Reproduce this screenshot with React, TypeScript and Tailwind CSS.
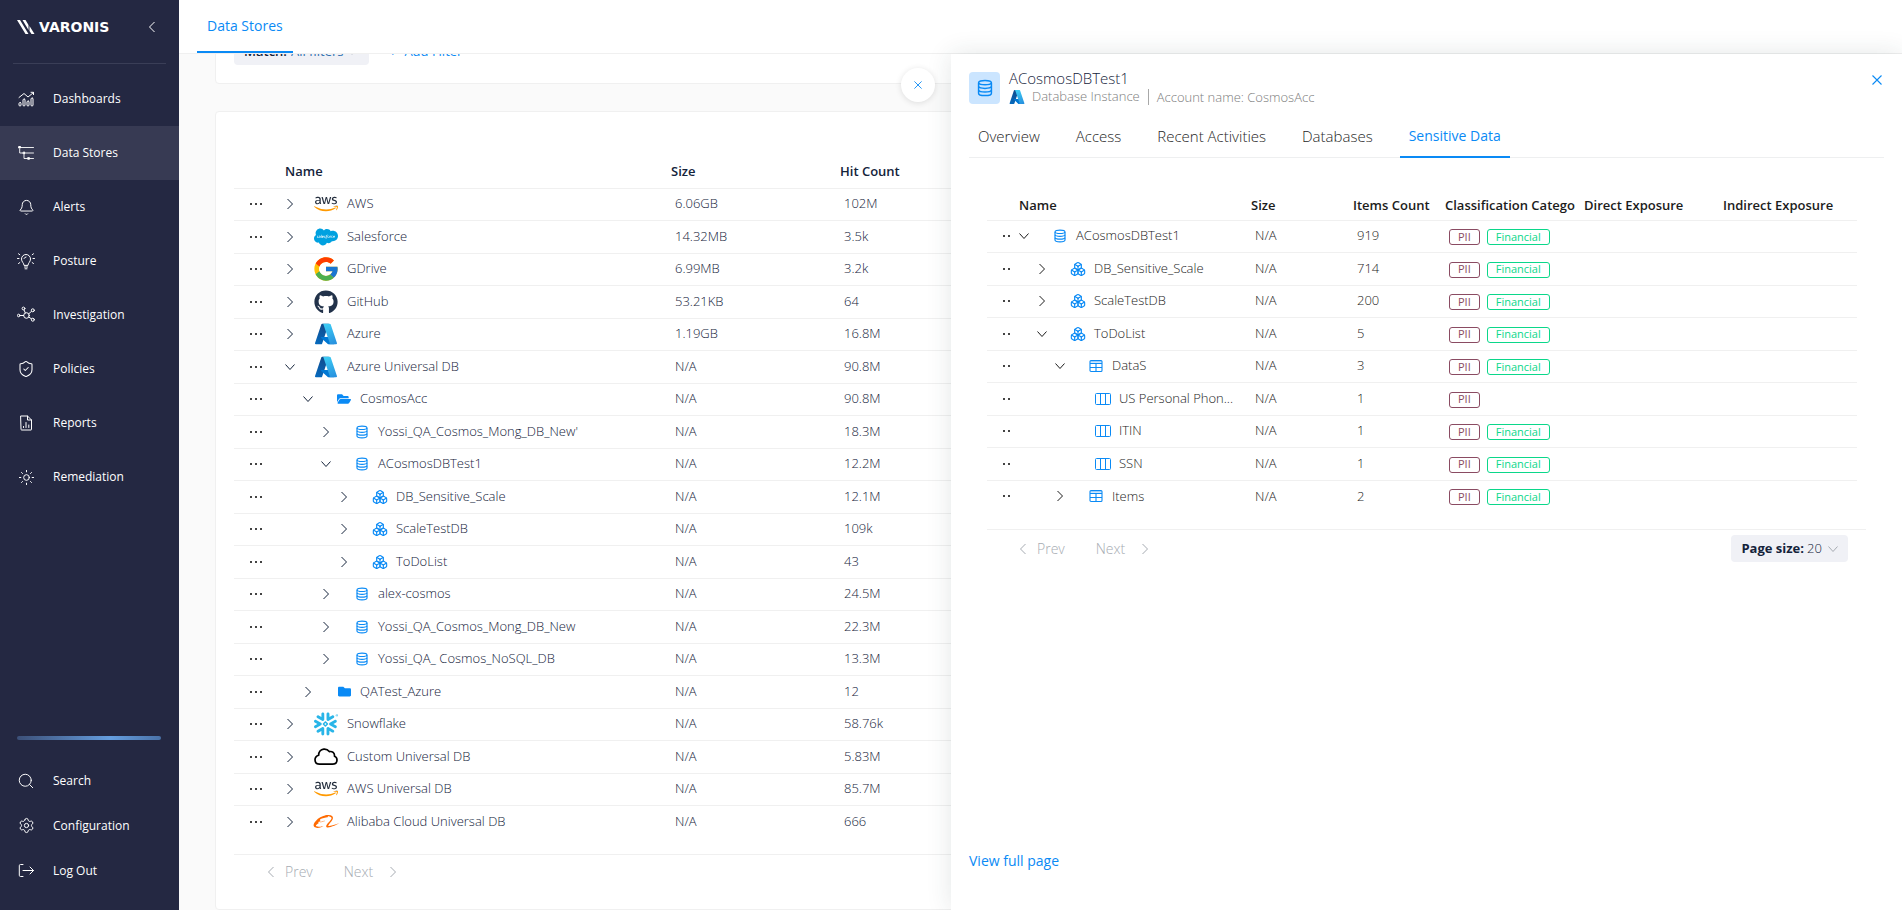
import type { ReactNode } from "react";
import { Bell, Boxes, Search, Settings, ShieldCheck, Sun } from "lucide-react";
import { FaAws, FaFolder, FaFolderOpen, FaGithub, FaSalesforce } from "react-icons/fa";
import { FcGoogle } from "react-icons/fc";
import { SiSnowflake } from "react-icons/si";
import { AiOutlineAlibaba } from "react-icons/ai";

/* ---------- icons ---------- */

type Dir = "left" | "right" | "down";

const CHEVRONS: Record<Dir, string> = {
  left: "M7.5 1 2.5 6l5 5",
  right: "M2.5 1l5 5-5 5",
  down: "M0.5 3.5 5 8.5l4.500-5",
};

function Chevron({ dir, className = "" }: { dir: Dir; className?: string }) {
  return (
    <svg viewBox="0 0 10 12" aria-hidden="true" className={`h-3 w-[10px] shrink-0 ${className}`} fill="none" stroke="currentColor" strokeWidth="1">
      <path d={CHEVRONS[dir]} />
    </svg>
  );
}

function Cross({ className }: { className: string }) {
  return (
    <svg viewBox="0 0 10 10" aria-hidden="true" className={className} fill="none" stroke="currentColor" strokeWidth="1.1">
      <path d="M.5.5l9 9M9.500.5l-9 9" />
    </svg>
  );
}

function AzureLogo({ className }: { className: string }) {
  return (
    <svg viewBox="0 0 96 96" aria-hidden="true" className={className}>
      <defs>
        <linearGradient id="az1" x1="0.6" y1="0" x2="0.3" y2="1">
          <stop offset="0" stopColor="#114a8b" />
          <stop offset="1" stopColor="#0669bc" />
        </linearGradient>
        <linearGradient id="az2" x1="0.4" y1="0" x2="0.7" y2="1">
          <stop offset="0" stopColor="#3ccbf4" />
          <stop offset="1" stopColor="#2892df" />
        </linearGradient>
      </defs>
      <path fill="url(#az1)" d="M33.338 6.544h26.038l-27.030 80.087a4.152 4.152 0 0 1-3.933 2.824H8.149a4.145 4.145 0 0 1-3.928-5.470L29.404 9.368a4.152 4.152 0 0 1 3.934-2.825z" />
      <path fill="#0078d4" d="M71.175 60.261h-41.290a1.911 1.911 0 0 0-1.305 3.309l26.532 24.764a4.171 4.171 0 0 0 2.846 1.121h23.380z" />
      <path fill="url(#az2)" d="M66.595 9.364a4.145 4.145 0 0 0-3.928-2.820H33.648a4.146 4.146 0 0 1 3.928 2.820l25.184 74.620a4.146 4.146 0 0 1-3.928 5.472h29.020a4.146 4.146 0 0 0 3.927-5.472z" />
    </svg>
  );
}

function AwsLogo() {
  return (
    <>
      <svg className="absolute size-0" aria-hidden="true">
        <defs>
          <linearGradient id="aws" x1="0" y1="0" x2="0" y2="1">
            <stop offset="0.62" stopColor="#252f3e" />
            <stop offset="0.62" stopColor="#ff9900" />
          </linearGradient>
        </defs>
      </svg>
      <FaAws className="h-5 w-6" fill="url(#aws)" />
    </>
  );
}

function CloudOutline() {
  return (
    <svg viewBox="0 0 24 18" aria-hidden="true" className="h-[18px] w-6" fill="none" stroke="#000" strokeWidth="1.7" strokeLinejoin="round">
      <path d="M5.500 16.200h13c2.600 0 4.500-1.700 4.500-4.100 0-2-1.100-3.400-2.500-3.900.3-3.300-2.200-5.200-5.200-4.600C14 1.800 12 .9 9.800 1.100 6.600 1.400 4.600 4 4.700 7.200 2.200 8 1 9.700 1 11.800c0 2.600 1.900 4.400 4.500 4.400z" />
    </svg>
  );
}

function DatabaseIcon({ className = "size-[14px]" }: { className?: string }) {
  return (
    <svg viewBox="0 0 14 14" aria-hidden="true" className={className} fill="none" stroke="#0a8af5" strokeWidth="1.150">
      <path d="M2 3c0-1.300 2.200-1.900 5-1.900S12 1.700 12 3v8c0 1.300-2.200 1.900-5 1.900S2 12.300 2 11z" />
      <path d="M2 3.100c.4 1 2.200 1.400 5 1.400s4.600-.4 5-1.400M2 5.900c.4 1 2.200 1.400 5 1.400s4.600-.4 5-1.400M2 8.700c.4 1 2.200 1.400 5 1.400s4.600-.4 5-1.400" />
    </svg>
  );
}

function TableIcon() {
  return (
    <svg viewBox="0 0 14 14" aria-hidden="true" className="size-[14px]" fill="none" stroke="#0a8af5" strokeWidth="1.100">
      <rect x="1" y="1.500" width="12" height="11" rx="1" />
      <path d="M1 4.500h12M1 8.500h12M7 4.500v8" />
      <path d="M1.500 2.500h11" strokeOpacity="0.4" strokeWidth="2" />
    </svg>
  );
}

function ColumnsIcon() {
  return (
    <svg viewBox="0 0 16 14" aria-hidden="true" className="h-[14px] w-4" fill="none" stroke="#0a8af5" strokeWidth="1">
      <rect x=".5" y="1.500" width="15" height="11" rx="1" />
      <path d="M5.500 1.500v11M10.500 1.500v11" />
    </svg>
  );
}

function NavSvg({ children }: { children: ReactNode }) {
  return (
    <svg viewBox="0 0 18 18" aria-hidden="true" className="size-[18px]" fill="none" stroke="currentColor" strokeWidth="1" strokeLinecap="round" strokeLinejoin="round">
      {children}
    </svg>
  );
}

const DashboardsIcon = () => (
  <NavSvg>
    <path d="M2 7.500 7 3.500l4 3.500 5.500-4.500M14 2.300h2.500v2.300" />
    <rect x="2" y="12.500" width="2" height="3.500" rx="1" />
    <rect x="6" y="9" width="2" height="7" rx="1" />
    <rect x="10" y="11" width="2" height="5" rx="1" />
    <rect x="14" y="8" width="2" height="8" rx="1" />
  </NavSvg>
);

const DataStoresIcon = () => (
  <NavSvg>
    <path d="M4 3.500h12.500M2.700 5v4h3.300M9 9h7.500M7 10.500v4h3M13 14.500h3.500" strokeWidth="0.9" />
    <rect x="2" y="2.500" width="1.500" height="1.500" fill="currentColor" />
    <rect x="6.500" y="8.200" width="1.500" height="1.500" fill="currentColor" />
    <rect x="11" y="13.700" width="1.500" height="1.500" fill="currentColor" />
  </NavSvg>
);

const PostureIcon = () => (
  <NavSvg>
    <path d="M7 13c0-2-2.500-3-2.500-6a4.500 4.500 0 0 1 9 0c0 3-2.500 4-2.500 6zM7.500 15h3M8 16.800h2M7 6.500A2.300 2.300 0 0 1 9 5" />
    <path d="M.5 6.500h1.500M16 6.500h1.500M1.500 1.800l1.300.9M16.500 1.800l-1.300.9M1.500 11.500l1.300-.9M16.500 11.500l-1.300-.9" />
  </NavSvg>
);

const InvestigationIcon = () => (
  <NavSvg>
    <circle cx="9.500" cy="9.500" r="2.800" />
    <circle cx="1.700" cy="9.500" r="1.300" />
    <circle cx="6.500" cy="2.500" r="1.400" />
    <circle cx="15.800" cy="4.300" r="1.500" />
    <circle cx="15.800" cy="13.700" r="1.500" />
    <path d="M3 9.500h3.700M7 3.900l1.300 3M11.800 7.800l2.700-2.500M11.800 11l2.700 1.900" />
  </NavSvg>
);

const ReportsIcon = () => (
  <NavSvg>
    <path d="M4 2h6.500L14.500 6v9.500a.5.5 0 0 1-.5.5H4.500a.5.5 0 0 1-.5-.5zM10.500 2v4h4M6.500 13.500v-1M9 13.500v-5M11.800 13.500V11" />
  </NavSvg>
);

const LogOutIcon = () => (
  <NavSvg>
    <path d="M6 2.500H3.500a1.200 1.200 0 0 0-1.200 1.200v9.600a1.200 1.200 0 0 0 1.200 1.200H6M6 8.500h10.500M13 5l3.500 3.500L13 12" />
  </NavSvg>
);

/* ---------- sidebar ---------- */

const NAV: { label: string; icon: ReactNode; active?: boolean }[] = [
  { label: "Dashboards", icon: <DashboardsIcon /> },
  { label: "Data Stores", icon: <DataStoresIcon />, active: true },
  { label: "Alerts", icon: <Bell className="size-[17px]" strokeWidth={1.4} /> },
  { label: "Posture", icon: <PostureIcon /> },
  { label: "Investigation", icon: <InvestigationIcon /> },
  { label: "Policies", icon: <ShieldCheck className="size-[18px]" strokeWidth={1.4} /> },
  { label: "Reports", icon: <ReportsIcon /> },
  { label: "Remediation", icon: <Sun className="size-[17px]" strokeWidth={1.4} /> },
];

const TOOLS: { label: string; icon: ReactNode }[] = [
  { label: "Search", icon: <Search className="size-[18px]" strokeWidth={1.3} /> },
  { label: "Configuration", icon: <Settings className="size-[17px]" strokeWidth={1.4} /> },
  { label: "Log Out", icon: <LogOutIcon /> },
];

function Sidebar() {
  return (
    <aside className="flex w-[179px] shrink-0 flex-col bg-[#242842] text-xs text-white">
      <div className="flex h-[54px] items-center pr-[22px] pl-[17px]">
        <svg viewBox="0 0 18 14" aria-hidden="true" className="h-[14px] w-[18px]" fill="#fff">
          <path d="M0 0h3l8.500 14h-3zM5.500 0h3l3 5v5zM12.500 6l5 8h-3l-2-3z" />
        </svg>
        <span className="ml-1 font-['DejaVu_Sans'] text-sm leading-5 font-bold">VARONIS</span>
        <button type="button" aria-label="Collapse menu" className="ml-auto">
          <Chevron dir="left" />
        </button>
      </div>
      <hr className="mx-[13px] mt-[9px] mb-2 border-[#3a3e57]" />
      <nav>
        {NAV.map((n) => (
          <a key={n.label} href="#" className={`flex h-[54px] items-center ${n.active ? "bg-[#373a53]" : ""}`}>
            <span className="flex w-[53px] justify-center pr-px">{n.icon}</span>
            {n.label}
          </a>
        ))}
      </nav>
      <div className="mt-auto mr-[18px] ml-[17px] h-1 rounded-sm bg-linear-to-r from-[#3c5078] via-[#659edf] via-65% to-[#4a72a8]" />
      <nav className="mt-[18px] mb-[17px]">
        {TOOLS.map((n) => (
          <a key={n.label} href="#" className="flex h-[45px] items-center">
            <span className="flex w-[53px] justify-center pr-px">{n.icon}</span>
            {n.label}
          </a>
        ))}
      </nav>
    </aside>
  );
}

/* ---------- tree cells ---------- */

type Kind = "aws" | "salesforce" | "google" | "github" | "azure" | "snowflake" | "cloud" | "alibaba" | "open" | "folder" | "db" | "cubes" | "table" | "column";

const ICONS: Record<Kind, ReactNode> = {
  aws: <AwsLogo />,
  salesforce: <FaSalesforce className="h-5 w-6 text-[#00a1e0]" />,
  google: <FcGoogle className="size-7 shrink-0" />,
  github: <FaGithub className="size-6 text-[#22324a]" />,
  azure: <AzureLogo className="size-6" />,
  snowflake: <SiSnowflake className="size-6 text-[#29b5e8]" />,
  cloud: <CloudOutline />,
  alibaba: <AiOutlineAlibaba className="size-[29px] shrink-0 text-[#ff6a00]" />,
  open: <FaFolderOpen className="size-[14px] text-[#0a8af5]" />,
  folder: <FaFolder className="size-[13px] text-[#0a8af5]" />,
  db: <DatabaseIcon />,
  cubes: <Boxes className="size-4 shrink-0 text-[#0a8af5]" strokeWidth={1.7} />,
  table: <TableIcon />,
  column: <ColumnsIcon />,
};

const INDENT = ["pl-0", "pl-[18px]", "pl-[36px]", "pl-[54px]"];

function TreeLabel({ name, kind, depth, state }: { name: string; kind: Kind; depth: number; state?: Dir }) {
  const logo = !["open", "folder", "db", "cubes", "table", "column"].includes(kind);
  const leaf = !state;
  return (
    <div className={`flex items-center ${INDENT[depth]}`}>
      {state ? (
        <button type="button" aria-label={state === "down" ? "Collapse" : "Expand"}>
          <Chevron dir={state} />
        </button>
      ) : null}
      <span className={`flex shrink-0 items-center justify-center ${logo ? "ml-[19px] w-6" : leaf ? "ml-[22px] w-4" : "ml-6 w-[14px]"}`}>{ICONS[kind]}</span>
      <span className={`whitespace-nowrap ${leaf ? "ml-2" : "ml-[9px]"}`}>{name}</span>
    </div>
  );
}

function Dots({ count }: { count: number }) {
  return (
    <button type="button" aria-label="More actions" className="flex h-4 items-center gap-[3px] align-middle">
      {Array.from({ length: count }, (_, i) => (
        <span key={i} className="size-[2px] bg-[#444]" />
      ))}
    </button>
  );
}

function Pager() {
  return (
    <div className="flex items-center text-sm font-light text-[#a6abb2]">
      <button type="button" disabled className="flex items-center gap-[9px]">
        <Chevron dir="left" />
        Prev
      </button>
      <button type="button" disabled className="ml-[31px] flex items-center gap-[15px]">
        Next
        <Chevron dir="right" />
      </button>
    </div>
  );
}

/* ---------- main list ---------- */

type Row = [string, Kind, number, Dir, string, string];

const STORES: Row[] = [
  ["AWS", "aws", 0, "right", "6.06GB", "102M"],
  ["Salesforce", "salesforce", 0, "right", "14.32MB", "3.5k"],
  ["GDrive", "google", 0, "right", "6.99MB", "3.2k"],
  ["GitHub", "github", 0, "right", "53.21KB", "64"],
  ["Azure", "azure", 0, "right", "1.19GB", "16.8M"],
  ["Azure Universal DB", "azure", 0, "down", "N/A", "90.8M"],
  ["CosmosAcc", "open", 1, "down", "N/A", "90.8M"],
  ["Yossi_QA_Cosmos_Mong_DB_New'", "db", 2, "right", "N/A", "18.3M"],
  ["ACosmosDBTest1", "db", 2, "down", "N/A", "12.2M"],
  ["DB_Sensitive_Scale", "cubes", 3, "right", "N/A", "12.1M"],
  ["ScaleTestDB", "cubes", 3, "right", "N/A", "109k"],
  ["ToDoList", "cubes", 3, "right", "N/A", "43"],
  ["alex-cosmos", "db", 2, "right", "N/A", "24.5M"],
  ["Yossi_QA_Cosmos_Mong_DB_New", "db", 2, "right", "N/A", "22.3M"],
  ["Yossi_QA_ Cosmos_NoSQL_DB", "db", 2, "right", "N/A", "13.3M"],
  ["QATest_Azure", "folder", 1, "right", "N/A", "12"],
  ["Snowflake", "snowflake", 0, "right", "N/A", "58.76k"],
  ["Custom Universal DB", "cloud", 0, "right", "N/A", "5.83M"],
  ["AWS Universal DB", "aws", 0, "right", "N/A", "85.7M"],
  ["Alibaba Cloud Universal DB", "alibaba", 0, "right", "N/A", "666"],
];

function StoresTable() {
  return (
    <table className="w-full table-fixed border-collapse text-left text-[13px] text-[#14233b]">
      <colgroup>
        <col className="w-[51px]" />
        <col className="w-[386px]" />
        <col className="w-[169px]" />
        <col />
      </colgroup>
      <thead>
        <tr className="h-8 border-b border-[#f0f0f0]">
          <th aria-label="Actions" />
          <th className="font-semibold">Name</th>
          <th className="font-semibold">Size</th>
          <th className="font-semibold">Hit Count</th>
        </tr>
      </thead>
      <tbody className="font-light">
        {STORES.map(([name, kind, depth, state, size, hits], i) => (
          <tr key={i} className="border-b border-[#f0f0f0] last:border-0 odd:h-8 even:h-[33px]">
            <td className="p-0 pl-4"><Dots count={3} /></td>
            <td className="p-0"><TreeLabel name={name} kind={kind} depth={depth} state={state} /></td>
            <td className="p-0 pl-1">{size}</td>
            <td className="p-0 pl-1">{hits}</td>
          </tr>
        ))}
      </tbody>
    </table>
  );
}

function Filters() {
  return (
    <section className="-mt-[33px] flex items-end rounded border border-[#f0f0f0] bg-white px-[18px] pt-4 pb-[18px] text-[13px]">
      <div className="relative flex h-[27px] items-center rounded bg-[#f0f1f6] pr-[10px] pl-[10px]">
        <label htmlFor="match" className="font-semibold text-[#14233b]">Match:</label>
        <select id="match" className="ml-1 w-[68px] appearance-none bg-transparent text-[#2f6fae]">
          <option>All filters</option>
        </select>
        <span className="pointer-events-none absolute right-3 text-[#c4c8d0]"><Chevron dir="down" /></span>
      </div>
      <button type="button" className="ml-5 flex h-[27px] items-center gap-2 text-[#0a8af5]">
        <span>+</span>Add Filter
      </button>
    </section>
  );
}

/* ---------- detail panel ---------- */

const TABS = ["Overview", "Access", "Recent Activities", "Databases", "Sensitive Data"];

type Item = { name: string; kind: Kind; depth: number; state?: Dir; count: string; tags: string[] };

const BOTH = ["PII", "Financial"];

const ITEMS: Item[] = [
  { name: "ACosmosDBTest1", kind: "db", depth: 0, state: "down", count: "919", tags: BOTH },
  { name: "DB_Sensitive_Scale", kind: "cubes", depth: 1, state: "right", count: "714", tags: BOTH },
  { name: "ScaleTestDB", kind: "cubes", depth: 1, state: "right", count: "200", tags: BOTH },
  { name: "ToDoList", kind: "cubes", depth: 1, state: "down", count: "5", tags: BOTH },
  { name: "DataS", kind: "table", depth: 2, state: "down", count: "3", tags: BOTH },
  { name: "US Personal Phon...", kind: "column", depth: 3, count: "1", tags: ["PII"] },
  { name: "ITIN", kind: "column", depth: 3, count: "1", tags: BOTH },
  { name: "SSN", kind: "column", depth: 3, count: "1", tags: BOTH },
  { name: "Items", kind: "table", depth: 2, state: "right", count: "2", tags: BOTH },
];

function Tag({ label }: { label: string }) {
  const tone = label === "PII" ? "border-[#8a4b62] text-[#8a4b62]" : "border-[#0bd78a] text-[#0bd78a]";
  return <span className={`flex h-4 items-center rounded-[3px] border px-2 text-[11px] font-normal ${tone}`}>{label}</span>;
}

function ItemsTable() {
  return (
    <table className="w-full table-fixed border-collapse text-left text-[13px] text-[#1c1c1c]">
      <colgroup>
        <col className="w-8" />
        <col className="w-[232px]" />
        <col className="w-[102px]" />
        <col className="w-[92px]" />
        <col className="w-[139px]" />
        <col className="w-[139px]" />
        <col />
      </colgroup>
      <thead>
        <tr className="h-8 border-b border-[#f0f0f0] whitespace-nowrap">
          <th aria-label="Actions" />
          <th className="pt-[3px] font-semibold">Name</th>
          <th className="pt-[3px] font-semibold">Size</th>
          <th className="pt-[3px] font-semibold">Items Count</th>
          <th className="pt-[3px] font-semibold">Classification Catego</th>
          <th className="pt-[3px] font-semibold">Direct Exposure</th>
          <th className="pt-[3px] font-semibold">Indirect Exposure</th>
        </tr>
      </thead>
      <tbody className="font-light">
        {ITEMS.map((r) => (
          <tr key={r.name} className="border-b border-[#f0f0f0] last:border-0 odd:h-8 even:h-[33px]">
            <td className="p-0 pl-4"><Dots count={2} /></td>
            <td className="p-0"><TreeLabel name={r.name} kind={r.kind} depth={r.depth} state={r.state} /></td>
            <td className="p-0 pl-1">N/A</td>
            <td className="p-0 pl-1">{r.count}</td>
            <td className="p-0 pt-[2px] pl-1">
              <div className="flex gap-[7px]">{r.tags.map((t) => <Tag key={t} label={t} />)}</div>
            </td>
            <td />
            <td />
          </tr>
        ))}
      </tbody>
    </table>
  );
}

function DetailPanel() {
  return (
    <aside className="absolute top-[54px] right-0 bottom-0 flex w-1/2 flex-col bg-white px-[18px] shadow-[0_0_24px_rgba(30,60,60,0.12)]">
      <button type="button" aria-label="Close panel" className="absolute top-[14px] -left-[50px] flex size-[34px] items-center justify-center rounded-full bg-white text-[#0a8af5] shadow-[0_1px_6px_rgba(0,0,0,0.12)]">
        <Cross className="size-2" />
      </button>
      <header className="flex pt-[18px]">
        <span className="flex h-8 w-[31px] items-center justify-center rounded bg-[#cbe5ff]">
          <DatabaseIcon className="size-[18px]" />
        </span>
        <div className="-mt-1 ml-[9px]">
          <h1 className="text-[15px] leading-5 font-light text-[#14233b]">ACosmosDBTest1</h1>
          <div className="flex h-[17px] items-center text-[13px] font-light text-[#7d7d7d]">
            <AzureLogo className="size-4" />
            <span className="ml-[7px]">Database Instance</span>
            <span className="ml-2 border-l border-[#a8a8a8] pl-2 leading-4">Account name: CosmosAcc</span>
          </div>
        </div>
        <button type="button" aria-label="Close" className="mt-[3px] mr-[2px] ml-auto self-start text-[#0a8af5]">
          <Cross className="size-[10px]" />
        </button>
      </header>
      <nav className="mt-[15px] flex h-[38px] gap-[18px] border-b border-[#eeeff0] text-[15px] leading-5 font-light text-[#262626]">
        {TABS.map((t, i) => (
          <a
            key={t}
            href="#"
            aria-current={i === 4 ? "page" : undefined}
            className={`-mb-px px-[9px] pt-[6px] ${i === 4 ? "border-b-2 border-[#0a8af5] text-sm leading-5 font-normal text-[#0a8af5]" : ""}`}
          >
            {t}
          </a>
        ))}
      </nav>
      <div className="px-[18px] pt-[30px]">
        <div className="mr-[9px]"><ItemsTable /></div>
        <div className="mt-[17px] flex items-start justify-between border-t border-[#f0f0f0] pt-[5px] pr-[18px] pl-[31px]">
          <div className="pt-1"><Pager /></div>
          <div className="relative flex h-[27px] items-center rounded bg-[#f0f1f6] pl-[10px] text-[13px] text-[#14233b]">
            <label htmlFor="page-size" className="font-bold">Page size:</label>
            <select id="page-size" className="ml-[3px] w-[41px] appearance-none bg-transparent font-light">
              <option>20</option>
            </select>
            <span className="pointer-events-none absolute right-[10px] text-[#a6abb2]"><Chevron dir="down" /></span>
          </div>
        </div>
      </div>
      <a href="#" className="mt-auto mb-[39px] self-start text-sm leading-5 text-[#0a8af5]">View full page</a>
    </aside>
  );
}

export default function App() {
  return (
    <div className="relative flex h-screen overflow-hidden bg-[#fafafa] font-['Open_Sans',sans-serif]">
      <Sidebar />
      <main className="flex min-w-0 flex-1 flex-col">
        <header className="flex h-[54px] shrink-0 border-b border-[#f0f0f0] bg-white pl-[18px]">
          <a href="#" className="flex items-center border-b-2 border-[#0a8af5] px-[10px] text-sm text-[#0a8af5]">Data Stores</a>
        </header>
        <div className="min-h-0 flex-1 overflow-hidden pr-9 pl-9">
          <Filters />
          <section className="mt-[27px] h-[799px] rounded border border-[#f0f0f0] bg-white px-[18px] pt-[44px]">
            <StoresTable />
            <div className="mt-4 border-t border-[#f0f0f0] pt-[7px] pl-8">
              <Pager />
            </div>
          </section>
        </div>
      </main>
      <DetailPanel />
    </div>
  );
}
